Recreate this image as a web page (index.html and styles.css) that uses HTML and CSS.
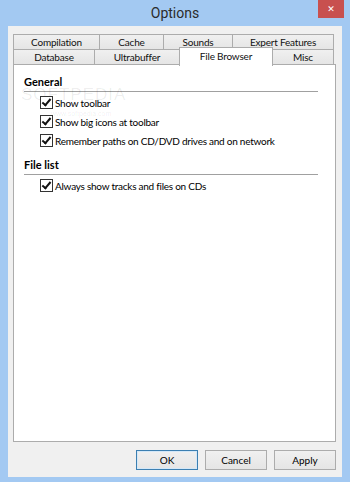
FILE: index.html
```html
<!DOCTYPE html>
<html lang="en">
<head>
    <meta charset="UTF-8">
    <meta name="viewport" content="width=device-width, initial-scale=1.0">
    <title>Options</title>
    <link rel="stylesheet" href="styles.css">
</head>
<body>
    <div class="window">
        <div class="titlebar">
            <span></span>
            <span class="title">Options</span>
            <button class="close-button">&#x2715;</button>
        </div>

        <div class="client">
            <div class="tabs">
                <div class="tab-row">
                    <div class="tab w-compilation">Compilation</div>
                    <div class="tab w-cache">Cache</div>
                    <div class="tab w-sounds">Sounds</div>
                    <div class="tab w-expert">Expert Features</div>
                </div>
                <div class="tab-row">
                    <div class="tab w-database">Database</div>
                    <div class="tab w-ultra">Ultrabuffer</div>
                    <div class="tab active w-browser">File Browser</div>
                    <div class="tab w-misc">Misc</div>
                </div>
            </div>

            <div class="panel">
                <div class="watermark">
                    <span class="wm-big">SOFTPEDIA</span>
                    <span class="wm-small">www.softpedia.com</span>
                </div>

                <div class="group-title">General</div>
                <div class="group">
                    <label class="check-row"><span class="checkbox"></span>Show toolbar</label>
                    <label class="check-row"><span class="checkbox"></span>Show big icons at toolbar</label>
                    <label class="check-row"><span class="checkbox"></span>Remember paths on CD/DVD drives and on network</label>
                </div>

                <div class="group-title">File list</div>
                <div class="group">
                    <label class="check-row"><span class="checkbox"></span>Always show tracks and files on CDs</label>
                </div>
            </div>

            <div class="buttons">
                <button class="btn default">OK</button>
                <button class="btn">Cancel</button>
                <button class="btn">Apply</button>
            </div>
        </div>
    </div>
</body>
</html>
```

FILE: styles.css
```css
* {
    margin: 0;
    padding: 0;
    box-sizing: border-box;
    font-family: Lato, "Liberation Sans", Arial, sans-serif;
}

body {
    background: #a3c9f2;
    width: 350px;
    height: 482px;
    overflow: hidden;
}

.window {
    height: 482px;
    display: flex;
    flex-direction: column;
}

/* title bar */
.titlebar {
    height: 26px;
    display: grid;
    grid-template-columns: 1fr auto 1fr;
}

.title {
    font-family: Roboto, sans-serif;
    font-size: 14px;
    color: #2b2b2b;
    line-height: 26px;
}

.close-button {
    justify-self: end;
    width: 26px;
    height: 18px;
    margin-right: 6px;
    border: none;
    background: #c8504f;
    color: white;
    font-family: "DejaVu Sans", sans-serif;
    font-size: 9px;
    font-weight: bold;
}

/* client area */
.client {
    flex: 1;
    margin: 0 8px 5px;
    background: #f0f0f0;
    padding: 8px 6px 7px 5px;
    display: flex;
    flex-direction: column;
}

.tabs {
    width: 321px;
    position: relative;
    z-index: 1;
}

.tab-row {
    display: flex;
    height: 15px;
}

.tab {
    height: 15px;
    border: 1px solid #acacac;
    border-bottom: none;
    margin-right: -1px;
    background: linear-gradient(#f0f0f0, #e5e5e5);
    font-size: 10px;
    letter-spacing: -0.2px;
    line-height: 14px;
    color: #111;
    text-align: center;
}

.tab.active {
    height: 19px;
    margin-top: -2px;
    background: white;
    position: relative;
    z-index: 2;
    line-height: 16px;
}

.w-compilation { width: 87px; }
.w-cache { width: 65px; }
.w-sounds { width: 70px; }
.w-expert { width: 102px; }
.w-database { width: 82px; }
.w-ultra { width: 86px; }
.w-browser { width: 94px; }
.w-misc { width: 62px; }

/* page body */
.panel {
    flex: 1;
    position: relative;
    background: white;
    border: 1px solid #acacac;
    padding: 9px 17px 0 10px;
}

.group-title {
    font-size: 11px;
    font-weight: bold;
    color: #000;
    line-height: 15px;
    padding-bottom: 2px;
    border-bottom: 1px solid #a0a0a0;
}

.group {
    padding: 1px 0 7px 16px;
}

.check-row {
    display: flex;
    align-items: center;
    height: 19px;
    font-size: 10px;
    letter-spacing: -0.25px;
    color: #000;
}

.checkbox {
    width: 13px;
    height: 13px;
    margin-right: 2px;
    border: 1px solid #333;
    background: white;
    position: relative;
}

.checkbox::after {
    content: "";
    position: absolute;
    left: 3px;
    top: 0;
    width: 3px;
    height: 7px;
    border: solid #111;
    border-width: 0 2px 2px 0;
    transform: rotate(40deg);
}

.watermark {
    position: absolute;
    left: 7px;
    top: 21px;
    display: flex;
    flex-direction: column;
    color: rgba(0, 0, 0, 0.07);
    pointer-events: none;
}

.wm-big {
    font-family: "Liberation Sans", sans-serif;
    font-size: 17px;
    line-height: 17px;
    letter-spacing: 1px;
}

.wm-small {
    font-family: "Liberation Sans", sans-serif;
    font-size: 7px;
    margin-left: 30px;
    margin-top: 7px;
}

/* bottom buttons */
.buttons {
    display: flex;
    justify-content: flex-end;
    gap: 7px;
    padding-top: 8px;
}

.btn {
    width: 62px;
    height: 20px;
    border: 1px solid #acacac;
    background: linear-gradient(#f0f0f0, #e5e5e5);
    font-size: 10px;
    color: #000;
}

.btn.default {
    border-color: #3c7fb1;
    box-shadow: inset 0 0 0 1px #d4e8f8;
}
```
